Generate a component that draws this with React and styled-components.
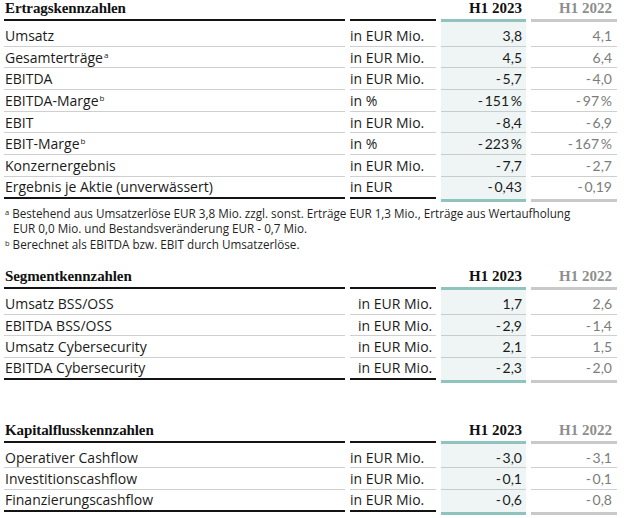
import React from 'react';
import styled, { createGlobalStyle, css } from 'styled-components';

const Global = createGlobalStyle`
  html, body { margin: 0; padding: 0; background: #ffffff; }
  body { font-family: "Open Sans", "Noto Sans", sans-serif; color: #1b1b1b; }
`;

const Page = styled.div`
  width: 644px;
  height: 518px;
  overflow: hidden;
  padding-left: 4px;
  box-sizing: border-box;
`;

const Table = styled.div`
  display: grid;
  grid-template-columns: 341px 86px 85px 86px;
  column-gap: 5px;
  margin-top: ${p => p.$top}px;
`;

const headBase = css`
  box-sizing: border-box;
  align-self: start;
  display: flex;
  align-items: flex-end;
  padding-bottom: 3px;
  font-family: "Liberation Serif", "Times New Roman", serif;
  font-weight: 700;
  font-size: 15px;
  line-height: 15px;
`;

const TitleCell = styled.div`
  ${headBase};
  height: 21px;
  border-bottom: 2px solid #141414;
  color: #111;
  padding-left: 1px;
  letter-spacing: -0.1px;
`;

const BlankHead = styled.div`
  ${headBase};
  height: 21px;
  border-bottom: 2px solid #141414;
`;

const YearHead = styled.div`
  ${headBase};
  height: 22px;
  justify-content: flex-end;
  padding-right: ${p => (p.$current ? 4 : 5)}px;
  border-bottom: 3px solid ${p => (p.$current ? '#8fc4be' : '#c9c9c9')};
  color: ${p => (p.$current ? '#111' : '#8e8e8e')};
`;

const cellBase = css`
  box-sizing: border-box;
  align-self: start;
  display: flex;
  align-items: center;
  height: ${p => (p.$first ? 24.7 : 21.7)}px;
  padding-top: ${p => (p.$first ? 3 : 0)}px;
  white-space: nowrap;
`;

const LabelCell = styled.div`
  ${cellBase};
  padding-left: 1px;
  font-size: 14px;
  color: #1b1b1b;
  border-bottom: ${p => (p.$last ? '2px solid #141414' : '1px solid #cfcfcf')};
`;

const UnitCell = styled.div`
  ${cellBase};
  padding-left: ${p => p.$pad}px;
  font-size: 14px;
  color: #1b1b1b;
  border-bottom: ${p => (p.$last ? '2px solid #141414' : '1px solid #cfcfcf')};
`;

const ValueCell = styled.div`
  ${cellBase};
  height: ${p => (p.$last ? 24.7 : p.$first ? 24.7 : 21.7)}px;
  padding-bottom: ${p => (p.$last ? 2 : 0)}px;
  justify-content: flex-end;
  padding-right: ${p => (p.$current ? 4 : 5)}px;
  font-family: Lato, "Open Sans", sans-serif;
  font-size: 14px;
  color: ${p => (p.$current ? '#1b1b1b' : '#7c7c7c')};
  background: ${p => (p.$current ? '#eef5f4' : 'transparent')};
  border-bottom: ${p =>
    p.$last
      ? `3.5px solid ${p.$current ? '#8fc4be' : '#c9c9c9'}`
      : `1px solid ${p.$current ? '#c6cecd' : '#cfcfcf'}`};
`;

const Sup = styled.sup`
  font-size: 8px;
  line-height: 0;
  vertical-align: 5px;
  margin-left: 1px;
`;

const Notes = styled.div`
  margin-top: 4px;
  font-size: 11.7px;
  line-height: 15.5px;
  color: #1f1f1f;
  white-space: nowrap;
`;

const Note = styled.div`
  padding-left: 9px;
  text-indent: -8px;
`;

const NoteMark = styled.sup`
  font-size: 7.5px;
  line-height: 0;
  vertical-align: 3px;
  margin-right: 3px;
`;

const fmt = v => v.replace(/^-/, '-\u2009').replace(' %', '\u2009%');

const sections = [
  {
    title: 'Ertragskennzahlen',
    top: 0,
    unitPad: 0,
    rows: [
      ['Umsatz', null, 'in EUR Mio.', '3,8', '4,1'],
      ['Gesamterträge', 'a', 'in EUR Mio.', '4,5', '6,4'],
      ['EBITDA', null, 'in EUR Mio.', '-5,7', '-4,0'],
      ['EBITDA-Marge', 'b', 'in %', '-151 %', '-97 %'],
      ['EBIT', null, 'in EUR Mio.', '-8,4', '-6,9'],
      ['EBIT-Marge', 'b', 'in %', '-223 %', '-167 %'],
      ['Konzernergebnis', null, 'in EUR Mio.', '-7,7', '-2,7'],
      ['Ergebnis je Aktie (unverwässert)', null, 'in EUR', '-0,43', '-0,19'],
    ],
    notes: true,
  },
  {
    title: 'Segmentkennzahlen',
    top: 16,
    unitPad: 8,
    rows: [
      ['Umsatz BSS/OSS', null, 'in EUR Mio.', '1,7', '2,6'],
      ['EBITDA BSS/OSS', null, 'in EUR Mio.', '-2,9', '-1,4'],
      ['Umsatz Cybersecurity', null, 'in EUR Mio.', '2,1', '1,5'],
      ['EBITDA Cybersecurity', null, 'in EUR Mio.', '-2,3', '-2,0'],
    ],
  },
  {
    title: 'Kapitalflusskennzahlen',
    top: 39,
    unitPad: 0,
    rows: [
      ['Operativer Cashflow', null, 'in EUR Mio.', '-3,0', '-3,1'],
      ['Investitionscashflow', null, 'in EUR Mio.', '-0,1', '-0,1'],
      ['Finanzierungscashflow', null, 'in EUR Mio.', '-0,6', '-0,8'],
    ],
  },
];

function Section({ s }) {
  const n = s.rows.length;
  return (
    <>
      <Table $top={s.top}>
        <TitleCell>{s.title}</TitleCell>
        <BlankHead />
        <YearHead $current>H1 2023</YearHead>
        <YearHead>H1 2022</YearHead>
        {s.rows.map((r, i) => {
          const first = i === 0;
          const last = i === n - 1;
          return (
            <React.Fragment key={r[0]}>
              <LabelCell $first={first} $last={last}>
                <span>
                  {r[0]}
                  {r[1] && <Sup>{r[1]}</Sup>}
                </span>
              </LabelCell>
              <UnitCell $first={first} $last={last} $pad={s.unitPad}>
                {r[2]}
              </UnitCell>
              <ValueCell $first={first} $last={last} $current>
                {fmt(r[3])}
              </ValueCell>
              <ValueCell $first={first} $last={last}>
                {fmt(r[4])}
              </ValueCell>
            </React.Fragment>
          );
        })}
      </Table>
      {s.notes && (
        <Notes>
          <Note>
            <NoteMark>a</NoteMark>Bestehend aus Umsatzerlöse EUR 3,8 Mio. zzgl. sonst. Erträge EUR 1,3 Mio., Erträge aus Wertaufholung
            <br />
            EUR 0,0 Mio. und Bestandsveränderung EUR - 0,7 Mio.
          </Note>
          <Note>
            <NoteMark>b</NoteMark>Berechnet als EBITDA bzw. EBIT durch Umsatzerlöse.
          </Note>
        </Notes>
      )}
    </>
  );
}

export default function App() {
  return (
    <Page>
      <Global />
      {sections.map(s => (
        <Section key={s.title} s={s} />
      ))}
    </Page>
  );
}
